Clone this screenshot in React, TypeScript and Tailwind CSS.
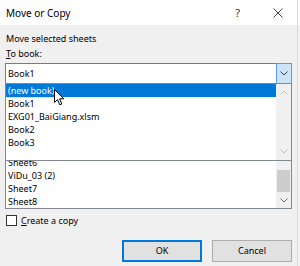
import React from "react";

function Chevron({ dir = "down", color = "#404040" }: { dir?: "down" | "up"; color?: string }) {
  return (
    <svg width="8" height="5" viewBox="0 0 8 5" className="block">
      {dir === "down" ? (
        <polyline points="0.5,0.5 4,4 7.5,0.5" fill="none" stroke={color} strokeWidth="1" />
      ) : (
        <polyline points="0.5,4.5 4,1 7.5,4.5" fill="none" stroke={color} strokeWidth="1" />
      )}
    </svg>
  );
}

function Row({ children }: { children: React.ReactNode }) {
  return <div className="h-[13px] leading-[13px] pl-[2px] whitespace-nowrap">{children}</div>;
}

export default function App() {
  return (
    <div className="w-[300px] h-[266px] bg-[#f0f0f0] relative overflow-hidden font-['Noto_Sans',sans-serif] text-[9px] text-black">
      {/* Title bar */}
      <div className="h-[25px] bg-white flex items-center pl-[6px] pr-[17px]">
        <span className="text-[10px] leading-none">Move or Copy</span>
        <span className="ml-auto text-[11px] leading-none text-[#333]">?</span>
        <svg width="10" height="10" viewBox="0 0 10 10" className="ml-[33px]">
          <line x1="0.5" y1="0.5" x2="9.5" y2="9.5" stroke="#444" strokeWidth="1" />
          <line x1="9.5" y1="0.5" x2="0.5" y2="9.5" stroke="#444" strokeWidth="1" />
        </svg>
      </div>

      {/* Body */}
      <div className="pl-[5px] pr-[8px] pt-[6px] flex flex-col">
        <div className="h-[15px] leading-[15px] pl-[1px]">Move selected sheets</div>
        <div className="h-[15px] leading-[15px] pl-[1px]">
          <span className="underline underline-offset-[1px]">T</span>o book:
        </div>

        {/* Combo */}
        <div className="relative mt-[2px] h-[21px] bg-white border border-[#7a7a7a] flex items-center">
          <span className="flex-1 pl-[2px]">Book1</span>
          <div className="w-[16px] h-[21px] -my-px -mr-px bg-[#cce4f7] border border-[#569de5] flex items-center justify-center">
            <Chevron />
          </div>

          {/* Dropdown list (overlay) */}
          <div className="absolute left-[-1px] right-[-1px] top-[19px] h-[78px] bg-white border border-[#828790] flex z-10">
            <div className="flex-1 flex flex-col">
              <div className="h-[13px] leading-[13px] pl-[2px] bg-[#0078d7] text-white">
                <span className="border-b border-dotted border-[#b8d6f2]">(new book)</span>
              </div>
              <Row>Book1</Row>
              <Row>EXG01_BaiGiang.xlsm</Row>
              <Row>Book2</Row>
              <Row>Book3</Row>
            </div>
            <div className="w-[15px] bg-[#f0f0f0] flex flex-col items-center justify-between py-[6px]">
              <Chevron dir="up" color="#c0c0c0" />
              <Chevron dir="down" color="#c0c0c0" />
            </div>
          </div>
        </div>

        {/* Before sheet label area (hidden under the dropdown) */}
        <div className="h-[15px] mt-[2px]" />
        <div className="h-[108px] bg-white border border-[#828790] flex overflow-hidden">
          <div className="flex-1 flex flex-col justify-end">
            <Row>Sheet6</Row>
            <Row>ViDu_03 (2)</Row>
            <Row>Sheet7</Row>
            <Row>Sheet8</Row>
          </div>
          <div className="w-[15px] bg-[#f0f0f0] flex flex-col">
            <div className="flex-1" />
            <div className="h-[22px] mx-[1px] bg-[#cdcdcd]" />
            <div className="h-[16px] flex items-center justify-center">
              <Chevron color="#707070" />
            </div>
          </div>
        </div>

        {/* Checkbox */}
        <div className="mt-[6px] flex items-center h-[11px]">
          <div className="w-[11px] h-[11px] bg-white border border-[#333] ml-[1px]" />
          <span className="ml-[4px] leading-none">
            <span className="underline underline-offset-[1px]">C</span>reate a copy
          </span>
        </div>

        {/* Buttons */}
        <div className="mt-[14px] flex justify-end gap-[10px]">
          <div className="w-[80px] h-[22px] bg-[#e1e1e1] border-2 border-[#0078d7] flex items-center justify-center">
            OK
          </div>
          <div className="w-[80px] h-[22px] bg-[#e1e1e1] border border-[#adadad] flex items-center justify-center">
            Cancel
          </div>
        </div>
      </div>

      {/* Mouse cursor */}
      <svg width="11" height="17" viewBox="0 0 11 17" className="absolute left-[54px] top-[89px] z-20">
        <path
          d="M0.5,0.5 L0.5,13.5 L3.5,10.5 L5.8,15.8 L7.8,15 L5.6,9.8 L9.8,9.8 Z"
          fill="white"
          stroke="black"
          strokeWidth="1"
          strokeLinejoin="round"
        />
      </svg>

      {/* Window right edge */}
      <div className="absolute top-0 bottom-0 left-[297px] w-px bg-[#d9d9d9]" />
    </div>
  );
}
